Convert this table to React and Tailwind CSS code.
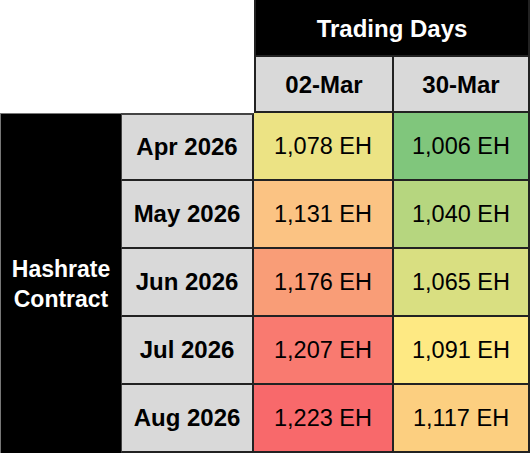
import React from "react";

const rows = [
  { m: "Apr 2026", a: "1,078 EH", ac: "bg-[#ece384]", b: "1,006 EH", bc: "bg-[#80c67c]" },
  { m: "May 2026", a: "1,131 EH", ac: "bg-[#fbc383]", b: "1,040 EH", bc: "bg-[#b6d67f]" },
  { m: "Jun 2026", a: "1,176 EH", ac: "bg-[#f99d77]", b: "1,065 EH", bc: "bg-[#d9df81]" },
  { m: "Jul 2026", a: "1,207 EH", ac: "bg-[#f97a70]", b: "1,091 EH", bc: "bg-[#fee983]" },
  { m: "Aug 2026", a: "1,223 EH", ac: "bg-[#f8696b]", b: "1,117 EH", bc: "bg-[#fccf80]" },
];

export default function App() {
  return (
    <div
      className="w-[532px] h-[455px] bg-white text-black"
      style={{ fontFamily: '"Liberation Sans", Arial, sans-serif' }}
    >
      <div className="grid grid-cols-[121px_133px_140px_136px] grid-rows-[57px_56px_68px_68px_68px_68px_68px]">
        <div className="col-span-2 row-span-2 bg-white" />
        <div className="col-span-2 bg-black border-l-2 border-r-2 border-b-2 border-[#222] flex items-center justify-center pt-[3px] text-white font-bold text-[24px]">
          Trading Days
        </div>
        <div className="bg-[#d9d9d9] border-l-2 border-r-2 border-b-2 border-[#222] flex items-center justify-center pt-[2px] font-bold text-[24px]">
          02-Mar
        </div>
        <div className="bg-[#d9d9d9] border-r-2 border-b-2 border-[#222] flex items-center justify-center pt-[2px] font-bold text-[24px]">
          30-Mar
        </div>
        <div className="row-span-5 bg-black border-t border-l border-[#777] flex items-center justify-center text-white font-bold text-[23px] leading-[30px] text-center">
          Hashrate
          <br />
          Contract
        </div>
        {rows.map((r, i) => (
          <React.Fragment key={r.m}>
            <div
              className={`bg-[#d9d9d9] border-l border-[#444] border-r-2 border-b-2 border-r-[#222] border-b-[#222] flex items-center justify-center font-bold text-[24px] ${
                i === 0 ? "border-t-2 border-t-[#444]" : ""
              }`}
            >
              {r.m}
            </div>
            <div
              className={`${r.ac} border-r-2 border-b-2 border-[#222] flex items-center justify-center pt-[2px] text-[23.5px]`}
            >
              {r.a}
            </div>
            <div
              className={`${r.bc} border-r-2 border-b-2 border-[#222] flex items-center justify-center pt-[2px] text-[23.5px]`}
            >
              {r.b}
            </div>
          </React.Fragment>
        ))}
      </div>
    </div>
  );
}
